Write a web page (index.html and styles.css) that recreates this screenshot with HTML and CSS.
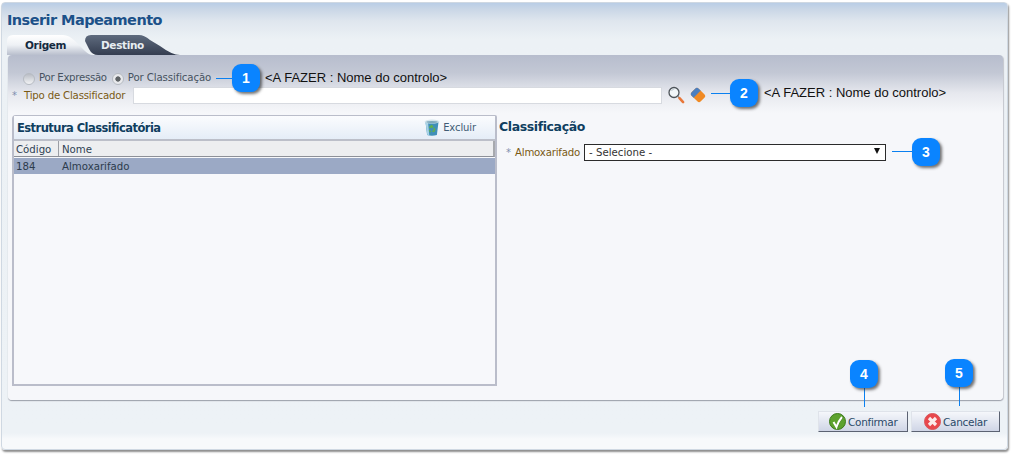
FILE: index.html
```html
<!DOCTYPE html>
<html lang="pt">
<head>
<meta charset="utf-8">
<title>Inserir Mapeamento</title>
<link rel="stylesheet" href="styles.css">
</head>
<body>
<div class="window">
  <h1 class="title">Inserir Mapeamento</h1>
  <div class="tabs">
    <div class="tab tab-active">Origem</div>
    <div class="tab tab-dark">Destino</div>
  </div>
  <div class="panel">
    <div class="radios">
      <span class="radio"></span><span class="radio-label">Por Expressão</span>
      <span class="radio radio-on"></span><span class="radio-label radio-label-wide">Por Classificação</span>
    </div>
    <div class="classifier">
      <span class="req">*</span><span class="label">Tipo de Classificador</span>
      <span class="text-input"></span>
      <svg class="icon-search" width="17" height="18" viewBox="0 0 17 18"><circle cx="6" cy="6.500" r="5" fill="#f2f6f9" stroke="#4d5359" stroke-width="1.300"/><path d="M3.500 5q1-2 3-2.200" fill="none" stroke="#b9c4cc"/><path d="M9.800 10.300l1.400 1.500" stroke="#8a8a8a" stroke-width="1.500"/><path d="M11.500 12.200l3.600 3.900" stroke="#e8773a" stroke-width="2.600" stroke-linecap="round"/></svg>
      <svg class="icon-eraser" width="16" height="16" viewBox="0 0 16 16"><g transform="rotate(-45 8 8)"><rect x="3" y="1.500" width="10" height="13" rx="2.500" fill="#f08a24"/><path d="M3 6.800V4q0-2.500 2.500-2.500h5Q13 1.500 13 4v2.800z" fill="#4b7fc0"/></g></svg>
    </div>
    <div class="columns">
      <section class="structure">
        <header class="structure-head">
          <h2 class="structure-title">Estrutura Classificatória</h2>
          <span class="delete">
            <svg width="16" height="17" viewBox="0 0 16 17"><path d="M1.500 3h13l-1.600 13q-5 1.400-9.800 0z" fill="#3f8fb8"/><path d="M1.500 3l1.800 13 2 .5L4 3z" fill="#a9d3e6"/><ellipse cx="8" cy="2.600" rx="7.500" ry="2" fill="#d5e5ec"/><ellipse cx="8" cy="3" rx="5.800" ry="1.100" fill="#7fa9bd"/><path d="M5 8l2.500-2.200 2 1.400-1.500 2-1.500-.8-.7 1.300zM10 8l1.500 2.500-1.200 2.500h-2v-1.500l1.800-.3-.8-1.700zM4.800 11l2 .7v1.600l-1.300-.3z" fill="#62b04a"/></svg>
            Excluir
          </span>
        </header>
        <div class="grid-head"><span class="col-code">Código</span><span class="col-name">Nome</span></div>
        <div class="grid-row"><span class="col-code">184</span><span class="col-name">Almoxarifado</span></div>
      </section>
      <section class="classification">
        <h2 class="classification-title">Classificação</h2>
        <div class="field">
          <span class="req">*</span><span class="label">Almoxarifado</span>
          <div class="select"><span>- Selecione -</span><i class="arrow"></i></div>
        </div>
      </section>
    </div>
  </div>
  <div class="actions">
    <button class="btn btn-ok" type="button">
      <svg width="17" height="17" viewBox="0 0 17 17"><circle cx="8.500" cy="8.500" r="8" fill="#5da22e" stroke="#3d7a1c"/><path d="M4.500 9l3 5q2-6 5.500-10" fill="none" stroke="#2f5d14" stroke-width="1" transform="translate(.8 .4)"/><path d="M4.500 9l3 5q2-6 5.500-10" fill="none" stroke="#fff" stroke-width="2"/></svg>
      Confirmar
    </button>
    <button class="btn btn-cancel" type="button">
      <svg width="17" height="17" viewBox="0 0 17 17"><circle cx="8.500" cy="8.500" r="8" fill="#e8474c" stroke="#d9555a"/><path d="M5 5l7 7M12 5l-7 7" stroke="#fbeaea" stroke-width="3.200"/></svg>
      Cancelar
    </button>
  </div>
</div>

<div class="note note-1">&lt;A FAZER : Nome do controlo&gt;</div>
<div class="note note-2">&lt;A FAZER : Nome do controlo&gt;</div>
<div class="line line-1"></div>
<div class="line line-2"></div>
<div class="line line-3"></div>
<div class="line-v line-4"></div>
<div class="line-v line-5"></div>
<div class="badge badge-1">1</div>
<div class="badge badge-2">2</div>
<div class="badge badge-3">3</div>
<div class="badge badge-4">4</div>
<div class="badge badge-5">5</div>
</body>
</html>
```
FILE: styles.css
```css
* { box-sizing: border-box; }
html, body { margin: 0; padding: 0; }
body {
  width: 1014px;
  height: 455px;
  position: relative;
  overflow: hidden;
  background: #fff;
  font-family: "DejaVu Sans", "Noto Sans", sans-serif;
  font-size: 10px;
  color: #3f4a55;
  padding: 2px 6px 5px 1px;
}
.window {
  height: 448px;
  border: 1px solid #cfd8e2;
  border-radius: 4px;
  box-shadow: 1px 2px 2px #8e8e8e;
  background: linear-gradient(#b9cde6 0, #c9d6e6 6px, #dfe6ee 18px, #ecf1f5 36px, #edf2f6 430px, #f7f9fb 436px);
  padding: 8px 3px 0 6px;
  display: flex;
  flex-direction: column;
}
.title {
  margin: 0 0 0 -1px;
  height: 18px;
  font-size: 14.500px;
  line-height: 18px;
  font-weight: bold;
  color: #1c5189;
  font-family: "DejaVu Sans", sans-serif;
  letter-spacing: -.55px;
}
.tabs {
  display: flex;
  margin-top: 6px;
  height: 20px;
}
.tab {
  font-weight: bold;
  font-size: 10.500px;
  line-height: 21px;
  letter-spacing: -.35px;
}
.tab-active {
  width: 86px;
  margin-left: -1px;
  padding-left: 18px;
  color: #14293f;
  background: linear-gradient(#fff, #eef1f5 50%, #b9bfcd);
  clip-path: path("M0 20V6Q0 0 6 0H56Q62 0 68 6L78 16Q82 20 86 20Z");
}
.tab-dark {
  width: 96px;
  margin-left: -9px;
  padding-left: 17px;
  color: #e8edf2;
  background: linear-gradient(#5f6b7e, #343d50);
  clip-path: path("M1 6Q1 0 7 0H55Q60 0 66 5L76 11Q88 20 96 20H14Q8 20 5 14Z");
}
.panel {
  width: 995px;
  height: 345px;
  border-radius: 4px;
  background: linear-gradient(#b7bdcd 0, #c3c8d5 18px, #e6e8ee 38px, #f6f7fa 58px, #f6f7fa 100%);
  box-shadow: 0 1px 1px #9fa3ad, 1px 1px 1px #c8cbd2;
  padding: 16px 5px 0 4px;
  display: flex;
  flex-direction: column;
}
.radios {
  display: flex;
  align-items: center;
  height: 14px;
  padding-left: 11px;
  font-size: 10.200px;
}
.radio {
  width: 12px;
  height: 12px;
  border-radius: 50%;
  margin-top: 2px;
  background: linear-gradient(#b9bdc5, #f2f3f5);
  border: 1px solid #b6bbc2;
}
.radio-on {
  margin-left: 5px;
  background: radial-gradient(circle, #5f6366 0 2.300px, #e8e9ec 3px);
}
.radio-label {
  margin: 0 0 2px 4px;
  color: #465260;
  letter-spacing: -.3px;
}
.radio-label-wide { letter-spacing: -.12px; }
.classifier {
  display: flex;
  align-items: center;
  height: 18px;
  margin-top: 1px;
}
.req { color: #7e8fae; font-size: 10px; }
.label {
  color: #7a5a14;
  margin-left: 7px;
  font-size: 10.200px;
  letter-spacing: -.2px;
}
.text-input {
  width: 529px;
  height: 17px;
  margin-left: 8px;
  background: #fff;
  border: 1px solid #d7dae0;
}
.icon-search { margin-left: 6px; }
.icon-eraser { margin-left: 5px; }
.columns {
  display: flex;
  margin-top: 11px;
  flex: 0 0 270px;
}
.structure {
  width: 485px;
  height: 271px;
  border: 2px solid #babdca;
  border-top-width: 1px;
  border-radius: 4px 2px 0 0;
  background: #f7f8fb;
}
.structure-head {
  height: 25px;
  display: flex;
  align-items: center;
  justify-content: space-between;
  background: linear-gradient(#fbfcfe, #e5edf7);
  border-bottom: 2px solid #bcbfc9;
  padding: 0 19px 0 3px;
}
.structure-title {
  margin: 0;
  font-size: 11.500px;
  font-weight: bold;
  color: #0f3e5f;
  letter-spacing: -.55px;
}
.delete {
  display: flex;
  align-items: center;
  gap: 3px;
  color: #3f5c75;
  font-size: 10px;
  letter-spacing: -.1px;
}
.grid-head {
  display: flex;
  height: 16px;
  line-height: 17px;
  background: #edeef0;
  border-bottom: 1px solid #8d9098;
  border-right: 2px solid #a7a9ae;
  font-size: 10.200px;
  color: #2f4254;
}
.grid-row {
  display: flex;
  height: 16px;
  line-height: 17px;
  margin-top: 1px;
  background: #9ba9c5;
  font-size: 10.200px;
  color: #2c3b4c;
}
.col-code { width: 45px; padding-left: 2px; }
.col-name { flex: 1; padding-left: 3px; }
.grid-head .col-code { border-right: 1px solid #9b9ea5; }
.classification {
  flex: 1;
  padding-left: 2px;
}
.classification-title {
  margin: 3px 0 0;
  height: 18px;
  font-size: 12.500px;
  line-height: 18px;
  font-weight: bold;
  color: #0f3e5f;
  letter-spacing: -.4px;
}
.field {
  display: flex;
  align-items: center;
  height: 18px;
  margin-top: 7px;
  padding-left: 7px;
}
.field .label { margin-left: 4px; }
.select {
  width: 302px;
  height: 17px;
  margin-left: 4px;
  background: #fff;
  border: 1px solid #2b2b2b;
  display: flex;
  align-items: center;
  justify-content: space-between;
  padding: 0 5px 0 4px;
  font-size: 10.200px;
  color: #333;
}
.arrow {
  width: 0;
  height: 0;
  border: 3.500px solid transparent;
  border-top: 6px solid #111;
  border-bottom: 0;
  margin-bottom: 2px;
}
.actions {
  display: flex;
  justify-content: flex-end;
  gap: 3px;
  margin-top: 11px;
  padding-right: 4px;
}
.btn {
  height: 21px;
  display: flex;
  align-items: center;
  gap: 2px;
  border: 1px solid;
  border-color: #dfe3ea #5b6272 #5b6272 #dfe3ea;
  background: linear-gradient(#f5f7fb, #cfd5e6);
  font-family: inherit;
  font-size: 10.500px;
  letter-spacing: -.3px;
  color: #2a4a68;
}
.btn-ok { width: 90px; padding: 0 0 0 10px; }
.btn-cancel { width: 89px; padding: 0 0 0 12px; }
.note {
  position: absolute;
  font-family: "Liberation Sans", Arial, sans-serif;
  font-size: 13px;
  line-height: 14px;
  color: #111;
  white-space: nowrap;
}
.note-1 { left: 265px; top: 71px; }
.note-2 { left: 764px; top: 86px; }
.line { position: absolute; height: 1px; background: #0a80f0; }
.line-v { position: absolute; width: 1px; background: #0a80f0; }
.line-1 { left: 216px; top: 78px; width: 20px; }
.line-2 { left: 711px; top: 93px; width: 22px; }
.line-3 { left: 892px; top: 151px; width: 24px; }
.line-4 { left: 864px; top: 385px; height: 22px; }
.line-5 { left: 959px; top: 385px; height: 21px; }
.badge {
  position: absolute;
  width: 28px;
  height: 28px;
  border-radius: 9px;
  background: #0a84ff;
  box-shadow: 2px 2px 3px rgba(40, 40, 40, .65);
  color: #fff;
  font-family: "Liberation Sans", Arial, sans-serif;
  font-weight: bold;
  font-size: 14px;
  line-height: 28px;
  text-align: center;
}
.badge-1 { left: 232px; top: 64px; }
.badge-2 { left: 730px; top: 79px; }
.badge-3 { left: 912px; top: 138px; }
.badge-4 { left: 850px; top: 360px; }
.badge-5 { left: 945px; top: 359px; }
```
